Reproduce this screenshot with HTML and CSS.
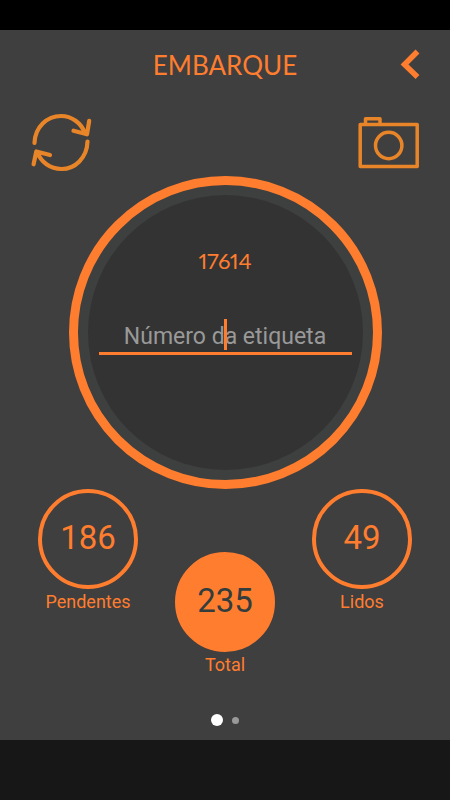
FILE: index.html
```html
<!DOCTYPE html>
<html lang="pt-BR">
<head>
<meta charset="utf-8">
<meta name="viewport" content="width=device-width, initial-scale=1">
<title>Embarque</title>
<link rel="stylesheet" href="styles.css">
</head>
<body>
<div class="status-bar"></div>
<main class="screen">
  <header class="header">
    <h1 class="title">EMBARQUE</h1>
    <button class="icon-button" type="button" aria-label="Voltar">
      <svg width="20" height="32" viewBox="0 0 20 32"><path d="M17.500 2.500 4.500 15.500 17.500 28" fill="none" stroke="#ff7d2e" stroke-width="5.500"/></svg>
    </button>
  </header>
  <div class="toolbar">
    <button class="icon-button" type="button" aria-label="Atualizar">
      <svg width="62" height="60" viewBox="0 0 62 60" fill="none" stroke="#e98529" stroke-width="4.200" stroke-linecap="round" stroke-linejoin="round">
        <path d="M4.500 31C5 15 17 4 31 4C42 4 51 11 55 21M43.500 18.700 57 22.300 59.200 8.800"/>
        <path d="M57.500 29.500C57 46 45 57 31.500 57C20 57 11 50 7.500 40.500M20 43 6.300 39.500 3.600 52.300"/>
      </svg>
    </button>
    <button class="icon-button" type="button" aria-label="Câmera">
      <svg width="62" height="60" viewBox="0 0 62 60" fill="none" stroke="#e98529" stroke-width="3.500" stroke-linejoin="round">
        <rect x="2.200" y="12.500" width="57" height="42"/>
        <path d="M7.500 12V6.800H22V12"/>
        <circle cx="30.700" cy="33.500" r="13.200"/>
      </svg>
    </button>
  </div>
  <section class="dial">
    <div class="dial-disc">
      <p class="code">17614</p>
      <div class="field">
        <input class="field-input" type="text" placeholder="Número da etiqueta" aria-label="Número da etiqueta">
        <span class="caret"></span>
      </div>
    </div>
  </section>
  <section class="stats">
    <div class="stat"><div class="circle">186</div><div class="label">Pendentes</div></div>
    <div class="stat stat-total"><div class="circle circle-filled">235</div><div class="label">Total</div></div>
    <div class="stat"><div class="circle">49</div><div class="label">Lidos</div></div>
  </section>
  <div class="pager"><span class="dot dot-active"></span><span class="dot"></span></div>
</main>
<footer class="nav-bar"></footer>
</body>
</html>
```
FILE: styles.css
```css
* { box-sizing: border-box; }

body {
  margin: 0;
  min-height: 100vh;
  display: flex;
  flex-direction: column;
  background: #3f3f3f;
  color: #ff7d2e;
  font-family: Roboto, sans-serif;
}

.status-bar { height: 30px; background: #000; }
.nav-bar { height: 60px; background: #171717; }

.screen {
  flex: 1;
  display: flex;
  flex-direction: column;
}

.header {
  display: grid;
  grid-template-columns: 1fr auto 1fr;
  align-items: center;
  height: 70px;
  padding: 0 30px;
}

.title {
  grid-column: 2;
  margin: 0;
  font: 400 26px/36px Lato, sans-serif;
}

.icon-button {
  display: flex;
  justify-self: end;
  padding: 0;
  border: 0;
  background: none;
  cursor: pointer;
}

.toolbar {
  display: flex;
  justify-content: space-between;
  align-items: center;
  height: 76px;
  padding: 8px 30px 0;
}

.dial {
  align-self: center;
  padding: 10px;
  border: 9px solid #ff7d2e;
  border-radius: 50%;
  background: #3d403e;
}

.dial-disc {
  width: 275px;
  height: 275px;
  padding: 50px 11px;
  border-radius: 50%;
  background: #333;
  text-align: center;
}

.code {
  margin: 0;
  font: 400 22px/32px Lato, sans-serif;
  font-variant-numeric: proportional-nums;
}

.field {
  position: relative;
  margin-top: 38px;
}

.field-input {
  display: block;
  width: 100%;
  height: 40px;
  padding: 6px 0 0;
  border: 0;
  border-bottom: 3px solid #ff7d2e;
  background: none;
  color: #ff7d2e;
  font: 23px/30px Roboto, sans-serif;
  text-align: center;
  outline: 0;
}

.field-input::placeholder { color: #999; opacity: 1; }

.caret {
  position: absolute;
  top: 4px;
  left: 50%;
  width: 3px;
  height: 31px;
  margin-left: -1px;
  background: #ff7d2e;
}

.stats {
  display: flex;
  justify-content: space-between;
  padding: 0 38px;
}

.stat { width: 100px; text-align: center; }
.stat-total { padding-top: 63px; }

.circle {
  display: flex;
  align-items: center;
  justify-content: center;
  height: 100px;
  padding-bottom: 3px;
  border: 4px solid #ff7d2e;
  border-radius: 50%;
  font-size: 33px;
}

.circle-filled { background: #ff7d2e; color: #333d3d; }

.label { font-size: 18px; line-height: 26px; }

.pager {
  display: flex;
  align-items: center;
  justify-content: center;
  gap: 9px;
  margin-top: auto;
  height: 40px;
}

.dot { width: 7px; height: 7px; border-radius: 50%; background: #999; }
.dot-active { width: 12px; height: 12px; background: #fff; }
```
